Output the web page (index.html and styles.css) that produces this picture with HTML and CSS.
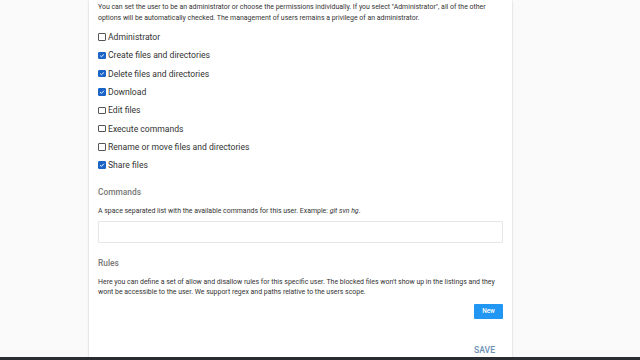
FILE: index.html
```html
<!DOCTYPE html>
<html lang="en">
<head>
<meta charset="UTF-8">
<title>User permissions</title>
<link rel="stylesheet" href="styles.css">
</head>
<body>
<div class="page">
    <div class="card">
        <p class="info">You can set the user to be an administrator or choose the permissions individually. If you select "Administrator", all of the other options will be automatically checked. The management of users remains a privilege of an administrator.</p>

        <div class="perms">
            <label class="perm"><span class="box"></span> Administrator</label>
            <label class="perm"><span class="box checked"></span> Create files and directories</label>
            <label class="perm"><span class="box checked"></span> Delete files and directories</label>
            <label class="perm"><span class="box checked"></span> Download</label>
            <label class="perm"><span class="box"></span> Edit files</label>
            <label class="perm"><span class="box"></span> Execute commands</label>
            <label class="perm"><span class="box"></span> Rename or move files and directories</label>
            <label class="perm"><span class="box checked"></span> Share files</label>
        </div>

        <h3>Commands</h3>
        <p class="info">A space separated list with the available commands for this user. Example: <i>git svn hg</i>.</p>
        <input class="commands" type="text">

        <h3 class="rules-title">Rules</h3>
        <p class="info">Here you can define a set of allow and disallow rules for this specific user. The blocked files won't show up in the listings and they wont be accessible to the user. We support regex and paths relative to the users scope.</p>
        <div class="actions">
            <button class="new-button">New</button>
        </div>

        <div class="save-row">
            <button class="save-button">SAVE</button>
        </div>
    </div>
</div>
<div class="bottom-bar"></div>
</body>
</html>
```

FILE: styles.css
```css
html, body {
    margin: 0;
    height: 360px;
    overflow: hidden;
}

body {
    display: flex;
    flex-direction: column;
    background-color: #fafafa;
    font-family: Roboto, "Liberation Sans", sans-serif;
    color: #212121;
}

.page {
    flex: 1;
    overflow: hidden;
}

.card {
    margin-left: 89px;
    width: 405px;
    height: 100%;
    padding: 0 9px;
    background-color: #fff;
    box-shadow: 0 0 2px rgba(0, 0, 0, 0.12), 0 1px 2px rgba(0, 0, 0, 0.1);
}

.info {
    margin: 0;
    font-size: 6.95px;
    line-height: 10.5px;
    color: #333;
}

.card > .info:first-child {
    padding-top: 2px;
}

.perms {
    margin-top: 5px;
}

.perm {
    display: flex;
    align-items: center;
    height: 18.3px;
    font-size: 8.6px;
    color: #333;
}

.box {
    display: inline-block;
    box-sizing: border-box;
    width: 7.5px;
    height: 7.5px;
    margin-right: 2.5px;
    border: 1px solid #555;
    border-radius: 1px;
    background: #fff;
}

.box.checked {
    border-color: #1a64c8;
    background: #1a64c8 url("data:image/svg+xml,%3Csvg xmlns='http://www.w3.org/2000/svg' viewBox='0 0 8 8'%3E%3Cpath d='M1.5 4.2l1.7 1.7 3.4-3.6' fill='none' stroke='%23fff' stroke-width='1.3'/%3E%3C/svg%3E") center / 100% no-repeat;
}

h3 {
    margin: 13px 0 9px;
    font-size: 8.4px;
    font-weight: 500;
    color: #777;
}

.commands {
    display: block;
    box-sizing: border-box;
    width: 100%;
    height: 22px;
    margin-top: 4px;
    border: 1px solid #e6e6e6;
    border-radius: 1px;
    outline: none;
}

.rules-title {
    margin-top: 15px;
}

.actions {
    display: flex;
    justify-content: flex-end;
    margin-top: 6px;
}

.new-button {
    width: 29px;
    height: 15px;
    padding: 0;
    border: none;
    border-radius: 1px;
    background-color: #2196f3;
    color: #fff;
    font-family: inherit;
    font-size: 6.4px;
    font-weight: 500;
}

.save-row {
    display: flex;
    justify-content: flex-end;
    margin-top: 26px;
    padding-right: 8px;
}

.save-button {
    padding: 0;
    border: none;
    background: none;
    color: #6a8fb5;
    font-family: inherit;
    font-size: 8.6px;
    font-weight: 500;
}

.bottom-bar {
    height: 3px;
    background-color: #2a2e33;
}
```
